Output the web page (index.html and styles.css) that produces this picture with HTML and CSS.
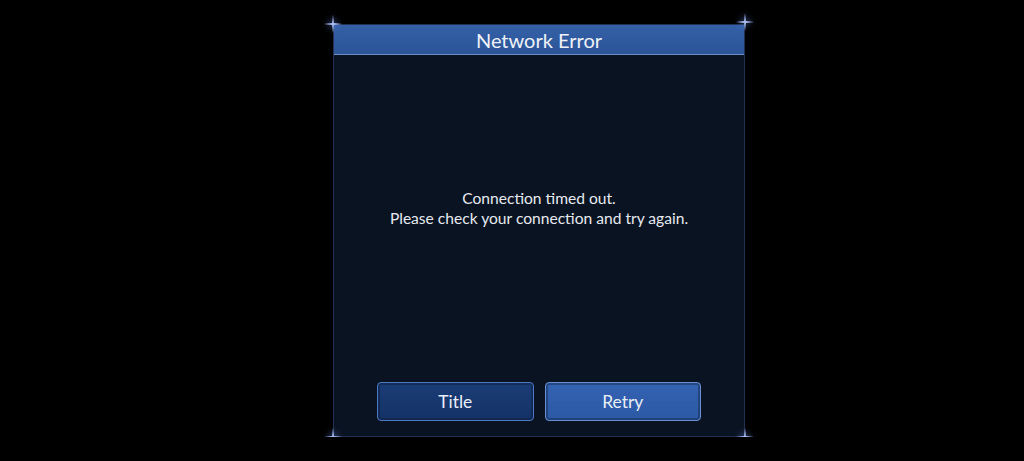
FILE: index.html
```html
<!DOCTYPE html>
<html lang="en">
<head>
  <meta charset="UTF-8">
  <meta name="viewport" content="width=device-width, initial-scale=1">
  <title>Network Error</title>
  <link rel="stylesheet" href="styles.css">
</head>
<body>

<div class="dialog">
  <svg class="spark tl" viewBox="0 0 20 20"><path d="M10 0 L11 9 L20 10 L11 11 L10 20 L9 11 L0 10 L9 9 Z"/></svg>
  <svg class="spark tr" viewBox="0 0 20 20"><path d="M10 0 L11 9 L20 10 L11 11 L10 20 L9 11 L0 10 L9 9 Z"/></svg>
  <svg class="spark bl" viewBox="0 0 20 20"><path d="M10 0 L11 9 L20 10 L11 11 L10 20 L9 11 L0 10 L9 9 Z"/></svg>
  <svg class="spark br" viewBox="0 0 20 20"><path d="M10 0 L11 9 L20 10 L11 11 L10 20 L9 11 L0 10 L9 9 Z"/></svg>

  <header class="dialog-title">Network Error</header>

  <div class="dialog-body">
    <p class="message">Connection timed out.<br>Please check your connection and try again.</p>
    <div class="actions">
      <button class="btn btn-dark">Title</button>
      <button class="btn btn-blue">Retry</button>
    </div>
  </div>
</div>

</body>
</html>
```

FILE: styles.css
```css
body {
  margin: 0;
  background-color: #000000;
  font-family: Lato, "Open Sans", sans-serif;
  color: #e8ecf2;
}
.dialog {
  position: relative;
  box-sizing: border-box;
  width: 412px;
  height: 413px;
  margin: 24px 0 0 333px;
  border: 1px solid #233252;
  background-color: #0a1321;
  display: flex;
  flex-direction: column;
}
.dialog-title {
  height: 29px;
  line-height: 30px;
  text-align: center;
  font-size: 20px;
  color: #eef2f8;
  background: linear-gradient(#3460a6, #2c5598);
  border-bottom: 1px solid #6f8fc8;
}
.dialog-body {
  flex: 1;
  display: flex;
  flex-direction: column;
  justify-content: space-between;
  padding: 0 43px 15px 43px;
}
.message {
  margin: 133px 0 0 0;
  text-align: center;
  font-size: 15.6px;
  line-height: 20px;
  color: #e6eaf0;
}
.actions {
  display: flex;
  gap: 11px;
}
.btn {
  flex: 1;
  height: 39px;
  font-family: inherit;
  font-size: 17.5px;
  color: #e8eef8;
  border: 1px solid #4f78c2;
  border-radius: 4px;
  box-shadow: inset 0 0 0 2px rgba(10, 20, 40, 0.35);
  cursor: pointer;
}
.btn-dark {
  background: linear-gradient(#1a3c76, #143266);
}
.btn-blue {
  background: linear-gradient(#3463b2, #2c58a4);
  border-color: #6a8fd0;
}
.spark {
  position: absolute;
  width: 18px;
  height: 18px;
  fill: #a9bcf0;
  filter: drop-shadow(0 0 3px #5a78d0);
}
.tl { left: -10px; top: -10px; }
.tr { right: -10px; top: -12px; }
.bl { left: -10px; bottom: -10px; }
.br { right: -10px; bottom: -10px; }
```
